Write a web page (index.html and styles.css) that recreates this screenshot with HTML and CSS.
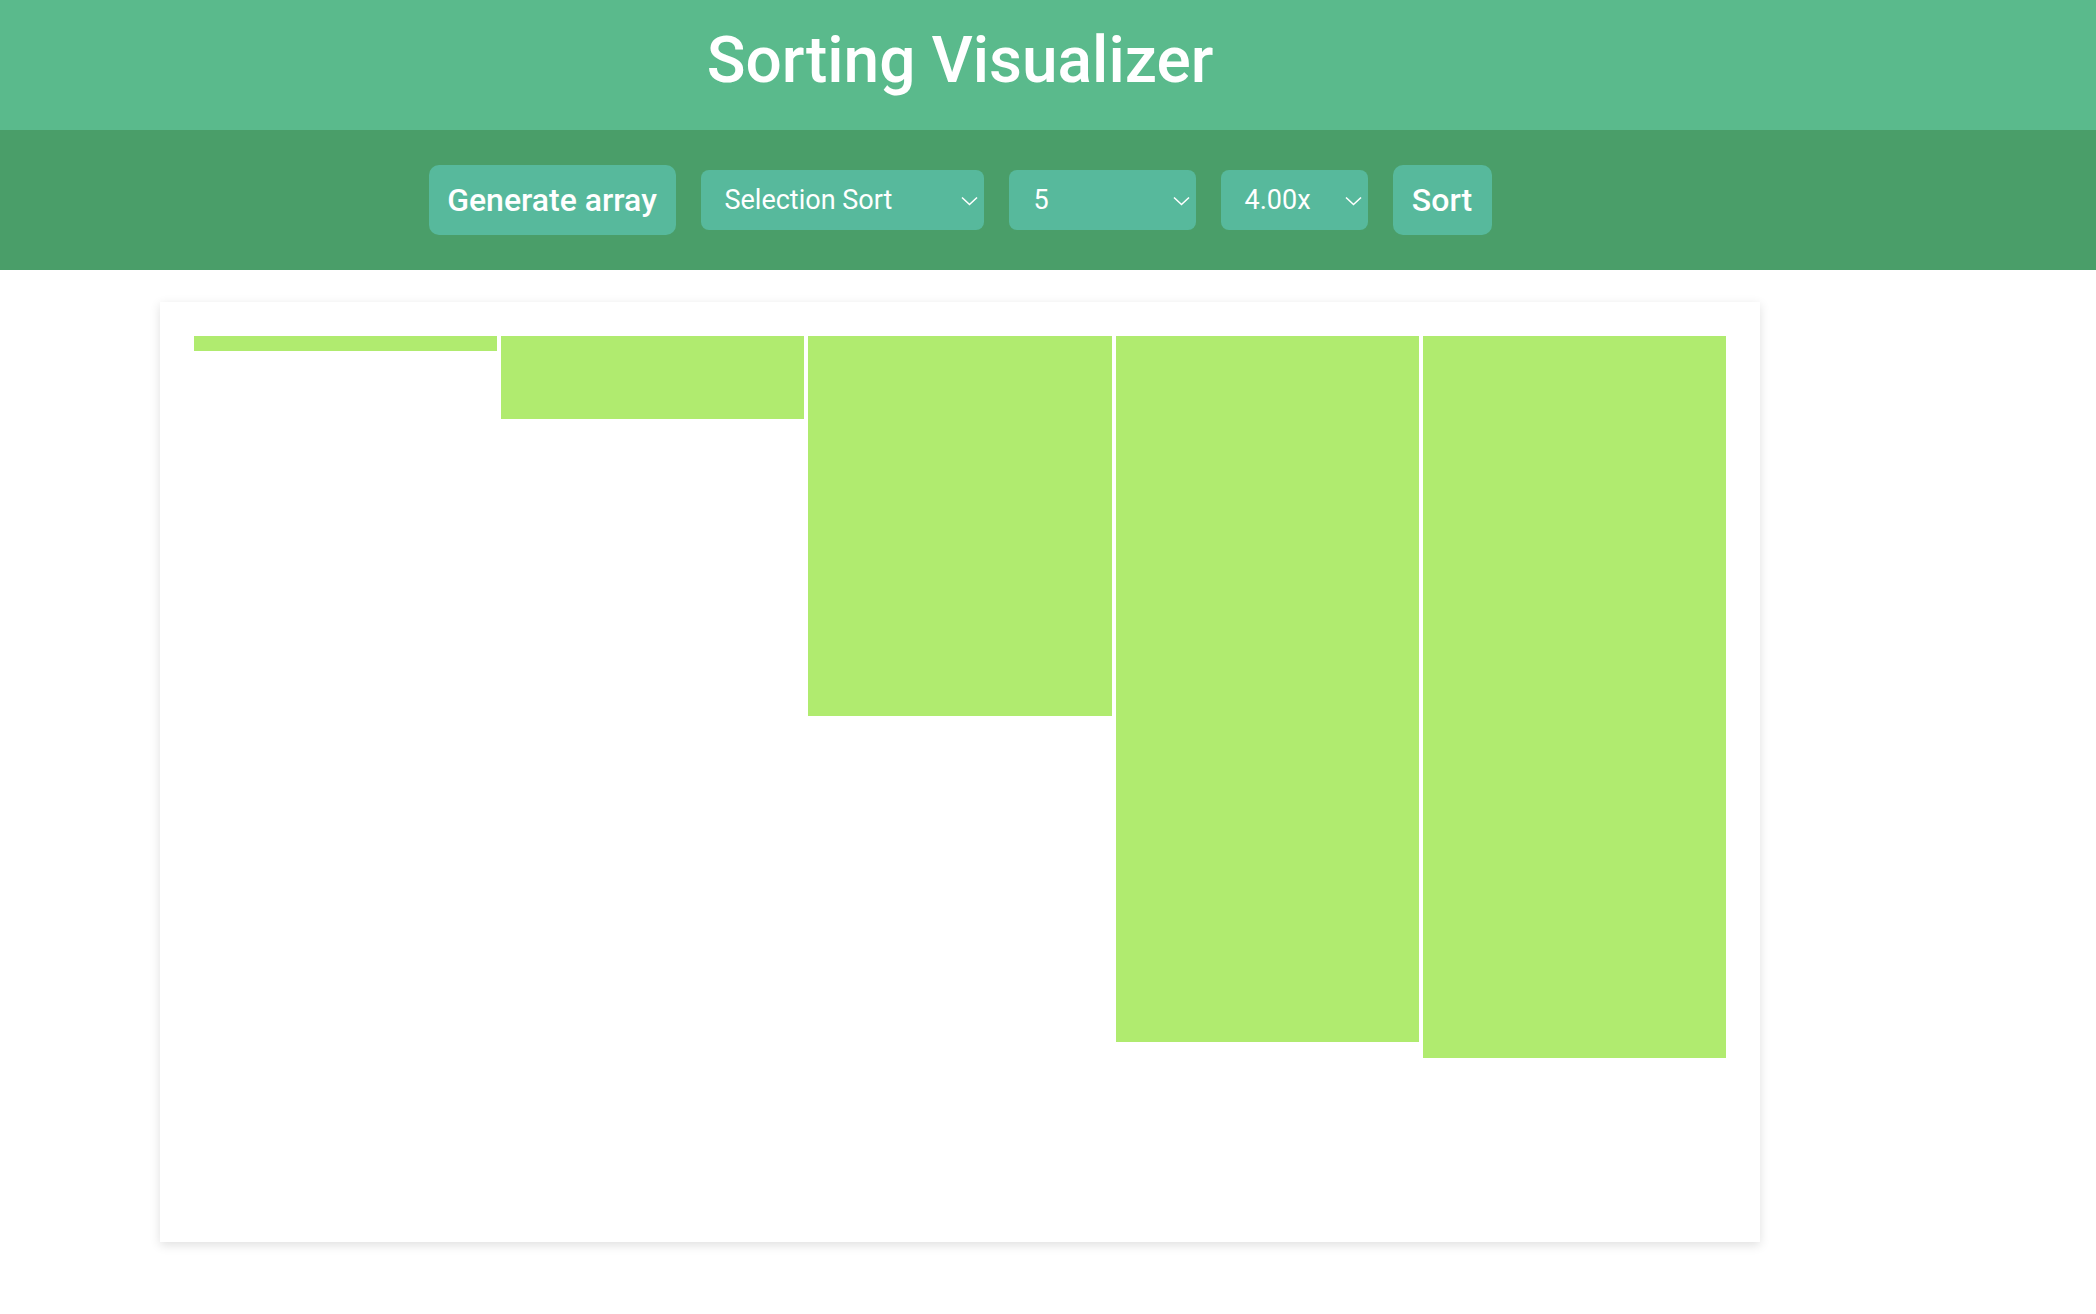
FILE: index.html
```html
<!DOCTYPE html>
<html lang="en">
<head>
<meta charset="utf-8">
<title>Sorting Visualizer</title>
<link rel="stylesheet" href="styles.css">
</head>
<body>
<header class="header">
  <div class="inner">
    <h1 class="title">Sorting Visualizer</h1>
  </div>
</header>
<nav class="toolbar">
  <div class="inner controls">
    <button class="btn btn-generate">Generate array</button>
    <div class="select select-algo"><span>Selection Sort</span><svg class="chev" width="17" height="10" viewBox="0 0 17 10"><path d="M1 1.5 L8.5 8.5 L16 1.5" fill="none" stroke="#fff" stroke-width="1.6"/></svg></div>
    <div class="select select-size"><span>5</span><svg class="chev" width="17" height="10" viewBox="0 0 17 10"><path d="M1 1.5 L8.5 8.5 L16 1.5" fill="none" stroke="#fff" stroke-width="1.6"/></svg></div>
    <div class="select select-speed"><span>4.00x</span><svg class="chev" width="17" height="10" viewBox="0 0 17 10"><path d="M1 1.5 L8.5 8.5 L16 1.5" fill="none" stroke="#fff" stroke-width="1.6"/></svg></div>
    <button class="btn btn-sort">Sort</button>
  </div>
</nav>
<div class="inner">
  <main class="card">
    <div class="bars">
      <div class="bar" style="height:15px"></div>
      <div class="bar" style="height:83px"></div>
      <div class="bar" style="height:380px"></div>
      <div class="bar" style="height:706px"></div>
      <div class="bar" style="height:722px"></div>
    </div>
  </main>
</div>
</body>
</html>
```
FILE: styles.css
```css
html, body {
  margin: 0;
  padding: 0;
  background: #ffffff;
  font-family: Roboto, "Liberation Sans", Arial, sans-serif;
}
.inner {
  width: 1920px;
}
.header {
  background: #5aba8c;
}
.header .inner {
  height: 130px;
  display: flex;
  justify-content: center;
  align-items: center;
}
.title {
  margin: 0 0 8px 0;
  color: #ffffff;
  font-size: 64px;
  font-weight: 500;
  line-height: 1;
}
.toolbar {
  background: #4a9e69;
}
.controls {
  height: 140px;
  display: flex;
  justify-content: center;
  align-items: center;
  gap: 25px;
}
.btn {
  height: 70px;
  border: none;
  border-radius: 10px;
  background: #57b99c;
  color: #ffffff;
  font-family: Roboto, "Liberation Sans", Arial, sans-serif;
  font-size: 32px;
  font-weight: 500;
  padding: 0;
  white-space: nowrap;
  cursor: pointer;
}
.btn-generate { width: 247px; }
.btn-sort { width: 99px; }
.select {
  height: 60px;
  border-radius: 8px;
  background: #57b99c;
  color: #ffffff;
  font-size: 27px;
  font-weight: 400;
  display: flex;
  align-items: center;
  justify-content: space-between;
  padding: 0 6px 0 24px;
  box-sizing: border-box;
}
.select-algo { width: 283px; }
.select-size { width: 187px; padding-left: 25px; }
.select-speed { width: 147px; }
.chev { display: block; margin-top: 1px; }
.card {
  width: 1600px;
  height: 940px;
  margin: 32px auto 60px;
  box-sizing: border-box;
  padding: 34px 32px;
  background: #ffffff;
  box-shadow: 0 3px 10px rgba(0, 0, 0, 0.13);
}
.bars {
  display: flex;
  align-items: flex-start;
}
.bar {
  flex: 1;
  margin: 0 2px;
  background: #b0eb6f;
}
```
